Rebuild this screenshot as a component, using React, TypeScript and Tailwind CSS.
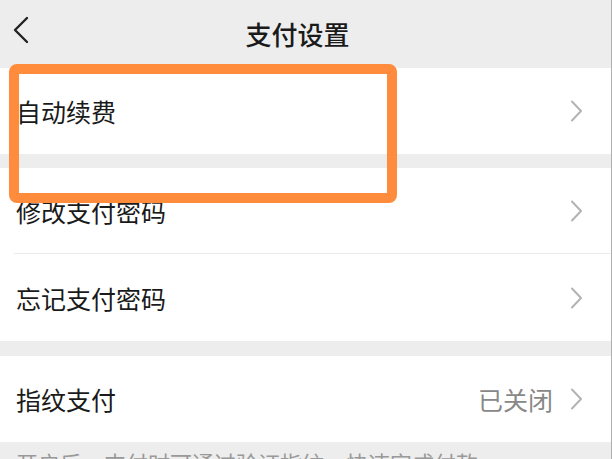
import React from "react";

const font = { fontFamily: '"Noto Sans CJK SC", "Noto Sans", sans-serif' };

function Chevron() {
  return (
    <svg width="13" height="22" viewBox="0 0 13 22" fill="none" className="shrink-0">
      <path d="M2 1.5 L11 11 L2 20.5" stroke="#b3b3b3" strokeWidth="2" strokeLinecap="round" strokeLinejoin="round" />
    </svg>
  );
}

function Row({ label, value, divider }: { label: string; value?: string; divider?: boolean }) {
  return (
    <div className="relative flex h-[86px] items-center bg-white pl-4 pr-[28px]">
      <span className="flex-1 text-[25px] leading-none text-[#1a1a1a]">{label}</span>
      {value && <span className="mr-[17px] text-[25px] leading-none text-[#888888]">{value}</span>}
      <Chevron />
      {divider && <div className="absolute bottom-0 left-[14px] right-0 h-px bg-[#ececec]" />}
    </div>
  );
}

export default function App() {
  return (
    <div style={font} className="relative h-[459px] w-[612px] overflow-hidden border-r border-[#b0b0b0] bg-[#ededed]">
      <div className="relative flex h-[68px] items-center justify-center pr-[16px]">
        <svg width="18" height="28" viewBox="0 0 18 28" fill="none" className="absolute left-[12px] top-[16px]">
          <path d="M15 2 L3 14 L15 26" stroke="#222" strokeWidth="2.4" strokeLinecap="round" strokeLinejoin="round" />
        </svg>
        <span className="text-[26px] font-medium leading-none text-[#1a1a1a]">支付设置</span>
      </div>
      <Row label="自动续费" />
      <div className="h-[14px]" />
      <Row label="修改支付密码" divider />
      <div className="h-px bg-white" />
      <Row label="忘记支付密码" />
      <div className="h-[15px]" />
      <Row label="指纹支付" value="已关闭" />
      <div className="px-4 pt-[9px] text-[22px] leading-[22px] text-[#999999]">开启后，支付时可通过验证指纹，快速完成付款</div>
      <div className="absolute left-[9px] top-[64px] h-[139px] w-[388px] rounded-[8px] border-[10px] border-[#ff8c3c]" />
    </div>
  );
}
